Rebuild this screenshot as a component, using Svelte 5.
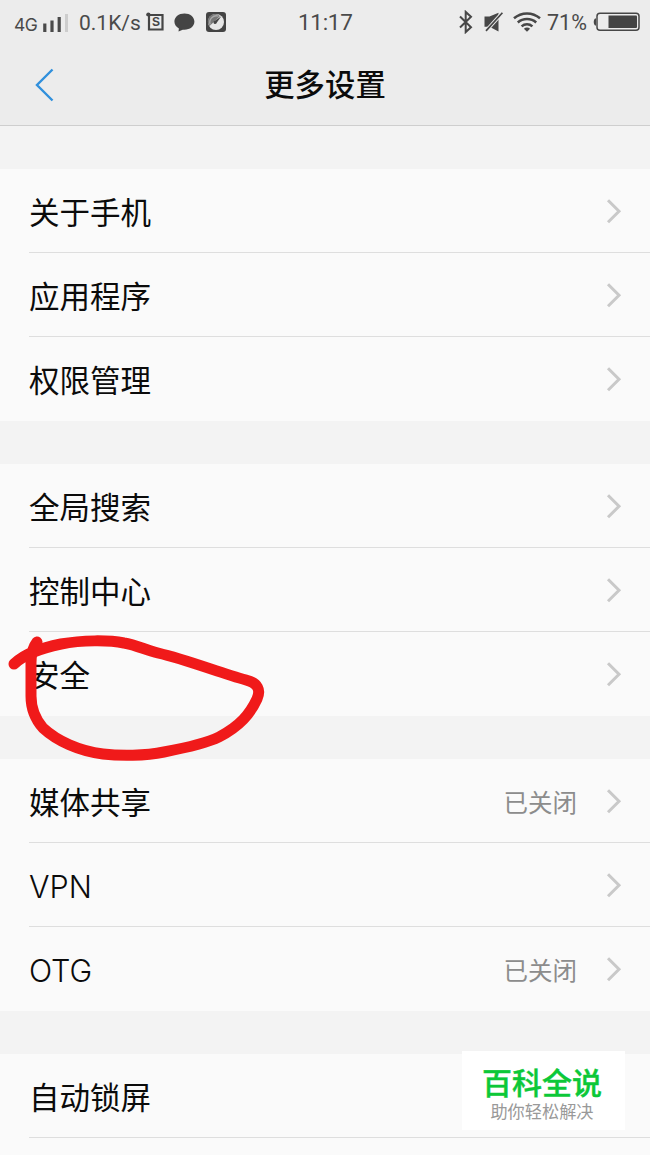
<script>
  const groups = [
    [{ label: '关于手机' }, { label: '应用程序' }, { label: '权限管理' }],
    [{ label: '全局搜索' }, { label: '控制中心' }, { label: '安全', marked: true }],
    [
      { label: '媒体共享', value: '已关闭' },
      { label: 'VPN', latin: true },
      { label: 'OTG', value: '已关闭', latin: true },
    ],
    [{ label: '自动锁屏' }, { label: '' }],
  ];
</script>

<div class="screen">
  <header>
    <div class="status">
      <div class="left">
        <span class="network">4G</span>
        <svg class="signal" width="26" height="20" viewBox="0 0 26 20">
          <path d="M1.8 9.5v8.5M9 6.5v11.5M16.2 3v15" stroke="#4a4a4a" stroke-width="3.2" />
          <path d="M23.5 0v18" stroke="#cdcdcd" stroke-width="3" />
        </svg>
        <span class="speed">0.1K/s</span>
        <svg class="app" width="19" height="20" viewBox="0 0 19 20">
          <path d="M3 1v16.5h13.5V3H.7" fill="none" stroke="#454545" stroke-width="2.2" />
          <circle cx="2.3" cy="2.5" r="2" fill="#454545" />
          <text x="9.9" y="14.4" text-anchor="middle" fill="#454545">S</text>
        </svg>
        <svg class="chat" width="21" height="19" viewBox="0 0 21 19">
          <path d="M10.5.4C4.7.4.4 3.9.4 8.6c0 2.9 1.6 5.4 4.5 6.9L4.5 18.6l4.2-1.9c6.5.7 11.7-2.8 11.7-8.1C20.4 3.9 16.2.4 10.5.4z" fill="#444" />
        </svg>
        <svg class="gauge" width="20" height="20" viewBox="0 0 20 20">
          <rect width="20" height="20" rx="3" fill="#444" />
          <circle cx="10" cy="10" r="8" fill="#e6e6e6" />
          <path d="M3.5 14A7.3 7.3 0 0 1 14 3.9L9.5 8.5z" fill="#777" />
          <path d="M4.2 12.5A6.5 6.5 0 0 1 12.5 4.2" fill="none" stroke="#aaa" stroke-width="1.3" />
          <path d="M15.3 4.3l-4.4 6.3a1.7 1.7 0 1 1-1.9-1.9z" fill="#444" />
        </svg>
      </div>
      <span class="time">11:17</span>
      <div class="right">
        <svg class="bluetooth" width="14" height="24" viewBox="0 0 14 24">
          <path d="M1 6.5l11 10.7-5.3 4.9V1.9L12 6.8 1 17.5" fill="none" stroke="#474747" stroke-width="2" />
        </svg>
        <svg class="muted" width="20" height="20" viewBox="0 0 20 20">
          <path d="M.5 4.5h5L14.5.8v18.7l-9-4.7h-5z" fill="#474747" />
          <path d="M2 18.9L18.4.7" stroke="#ececec" stroke-width="3.6" />
          <path d="M2 18.9L18.4.7" stroke="#474747" stroke-width="1.7" />
        </svg>
        <svg class="wifi" width="28" height="20" viewBox="0 0 28 20">
          <g fill="none" stroke="#474747" stroke-width="2.5">
            <path d="M1 6.3C8.5-.2 19.5-.2 27 6.3" />
            <path d="M4.8 10.5c5.2-4.6 13.2-4.6 18.4 0" />
            <path d="M8.6 14.4c3.1-2.8 7.7-2.8 10.8 0" />
          </g>
          <path d="M10.9 16.7c1.8-1.6 4.4-1.6 6.2 0L14 19.8z" fill="#474747" />
        </svg>
        <span class="percent">71%</span>
        <svg class="battery" width="47" height="20" viewBox="0 0 47 20">
          <path d="M3 6.5H2Q.7 7.5.7 10T2 13.5h1z" fill="#474747" />
          <rect x="4" y="1.2" width="42" height="17" rx="3" fill="none" stroke="#474747" stroke-width="1.5" />
          <path d="M15.5 3.5h27.5q1 0 1 1v10.4q0 1-1 1H15.5z" fill="#444" />
        </svg>
      </div>
    </div>
    <div class="navbar">
      <svg class="back" width="20" height="34" viewBox="0 0 20 34">
        <path d="M17.5 1.5L2 17l15.5 15.5" fill="none" stroke="#3190dc" stroke-width="2.4" />
      </svg>
      <h1>更多设置</h1>
    </div>
  </header>

  <main>
    {#each groups as group}
      <section>
        {#each group as item}
          <div class="row">
            <div class="cell">
              <span class="label" class:latin={item.latin}>{item.label}</span>
              {#if item.value}
                <span class="value">{item.value}</span>
              {/if}
              <svg class="chevron" width="16" height="26" viewBox="0 0 16 26">
                <path d="M2 2.3l11 11L2 24.3" fill="none" stroke="#c9c9c9" stroke-width="3" />
              </svg>
            </div>
            {#if item.marked}
              <svg class="scribble" width="280" height="150" viewBox="0 0 280 150">
                <path
                  d="M14 44C25 33 42 28 61 24C82 20 109 20 124 23C136 25 146 30 158 33C188 40 220 53 246 60C258 63 261 70 257 79C250 94 240 106 219 117C205 124 185 128 164 132C145 136 120 136 103 134C79 131 57 121 43 108C36 100 31 89 31 76L31 43C31 34 33 27 37 22"
                />
              </svg>
            {/if}
          </div>
        {/each}
      </section>
    {/each}
  </main>

  <div class="watermark">
    <strong>百科全说</strong>
    <span>助你轻松解决</span>
  </div>
</div>

<style>
  :global(body) {
    margin: 0;
    overflow: hidden;
  }
  .screen {
    position: relative;
    width: 650px;
    height: 1155px;
    overflow: hidden;
    background: #f3f3f3;
    color: #0b0b0b;
    font-family: Inter, 'Noto Sans CJK SC', sans-serif;
  }
  header {
    box-sizing: border-box;
    height: 126px;
    background: #ececec;
    border-bottom: 1px solid #cecece;
  }
  .status {
    display: grid;
    grid-template-columns: 298px 60px 1fr;
    height: 44px;
    align-items: center;
    color: #4a4a4a;
    font-family: Roboto, sans-serif;
    white-space: nowrap;
  }
  .left,
  .right {
    display: flex;
    align-items: center;
    height: 44px;
  }
  .left {
    padding-left: 14px;
  }
  .network {
    width: 29px;
    padding-top: 5px;
    font-family: Inter, sans-serif;
    font-size: 17.5px;
    letter-spacing: -0.5px;
  }
  .signal {
    margin-top: 4px;
  }
  .speed {
    width: 62px;
    margin-left: 10px;
    padding-top: 1px;
    font-size: 21px;
  }
  .app {
    margin-left: 5px;
  }
  .app text {
    font: bold 12px 'Liberation Sans', sans-serif;
  }
  .chat {
    margin-left: 9px;
  }
  .gauge {
    margin-left: 11px;
  }
  .time {
    font-size: 22.5px;
    letter-spacing: -0.3px;
  }
  .right {
    padding-left: 101px;
  }
  .muted {
    margin-left: 11px;
  }
  .wifi {
    margin-left: 9px;
  }
  .percent {
    width: 40px;
    margin-left: 6px;
    padding-top: 1px;
    font-size: 21.5px;
  }
  .battery {
    margin-left: 6px;
  }
  .left svg,
  .right svg {
    flex: none;
  }
  .navbar {
    display: grid;
    grid-template-columns: 60px 1fr 60px;
    align-items: center;
    height: 81px;
  }
  .back {
    margin-left: 35px;
  }
  h1 {
    margin: 0;
    padding-top: 1px;
    text-align: center;
    font-size: 30.4px;
    font-weight: 500;
    line-height: 44px;
  }
  section {
    margin-top: 43px;
    background: #fafafa;
  }
  .row {
    position: relative;
    height: 84px;
    padding-left: 29px;
  }
  .cell {
    box-sizing: border-box;
    display: flex;
    align-items: center;
    height: 84px;
    padding-right: 28px;
    border-bottom: 1px solid #dedede;
  }
  .row:last-child .cell {
    border-bottom-color: transparent;
  }
  .label {
    flex: 1;
    padding-top: 4px;
    font-size: 30.5px;
    line-height: 44px;
  }
  .latin {
    font-weight: 300;
  }
  .value {
    margin-right: 29px;
    padding-top: 1px;
    color: #8c8c8c;
    font-size: 24.5px;
  }
  .scribble {
    position: absolute;
    top: -12px;
    left: 0;
    z-index: 1;
  }
  .scribble path {
    fill: none;
    stroke: #f01a1a;
    stroke-width: 11;
    stroke-linecap: round;
    stroke-linejoin: round;
  }
  .watermark {
    position: absolute;
    top: 1051px;
    left: 462px;
    box-sizing: border-box;
    display: flex;
    flex-direction: column;
    align-items: center;
    width: 163px;
    height: 79px;
    padding: 13px 3px 0 0;
    background: #fff;
  }
  .watermark strong {
    color: #0cc838;
    font-size: 30px;
    font-weight: 500;
    line-height: 39px;
    -webkit-text-stroke: 0.4px #0cc838;
  }
  .watermark span {
    color: #999;
    font-size: 17.2px;
    line-height: 18px;
  }
</style>
